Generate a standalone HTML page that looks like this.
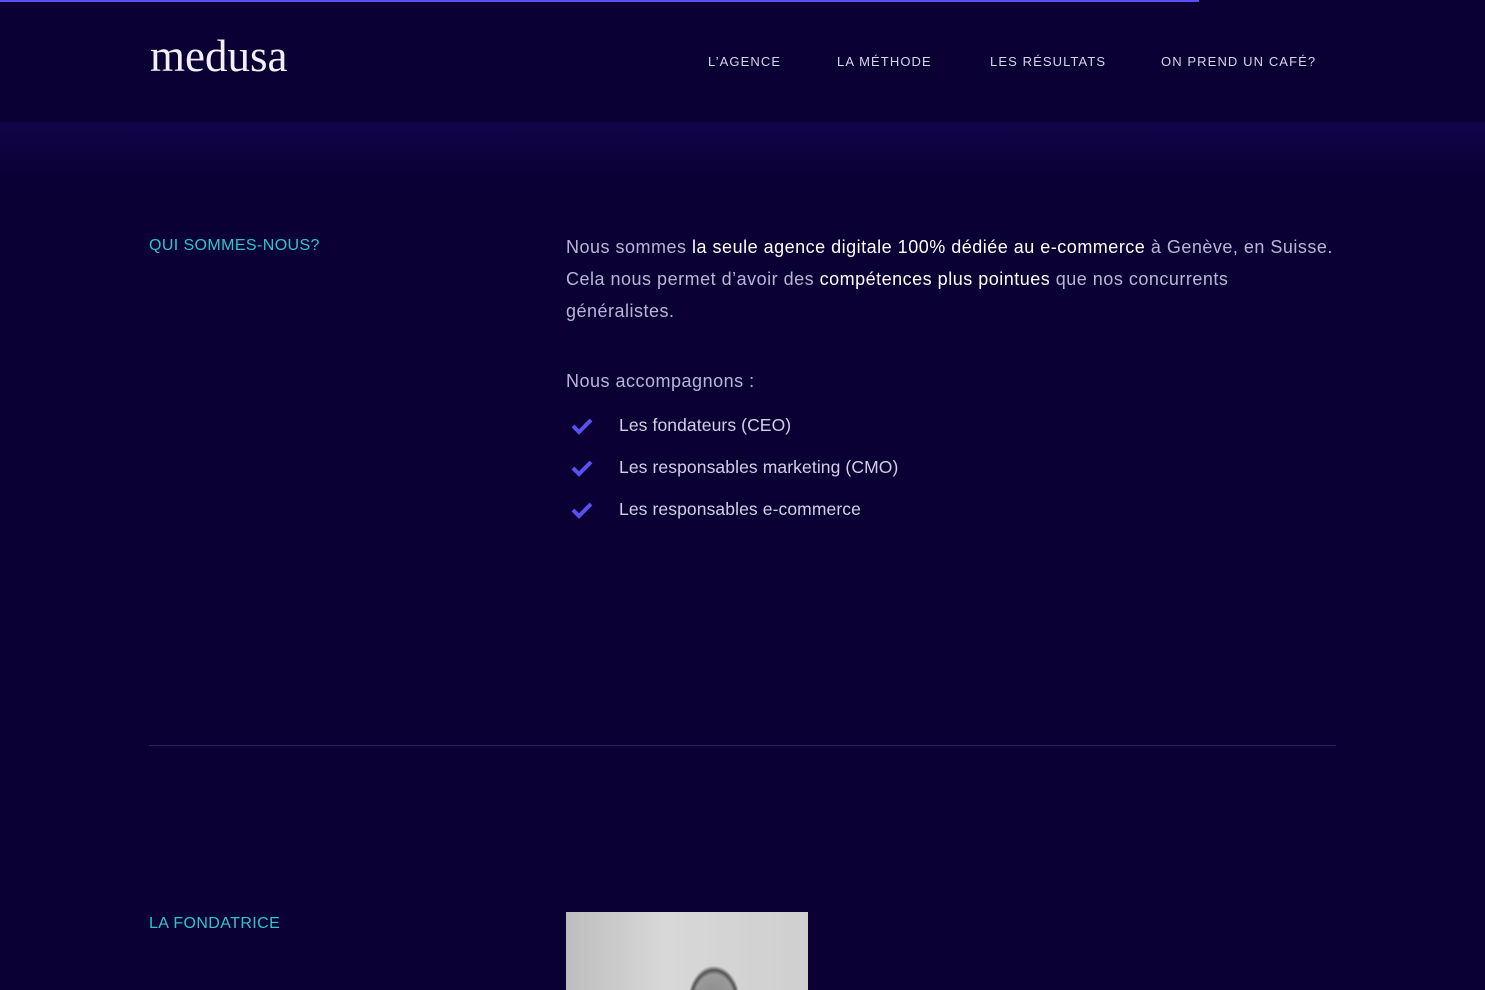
<!DOCTYPE html>
<html><head><meta charset="utf-8"><style>
*{margin:0;padding:0;box-sizing:border-box}
body{width:1485px;height:990px;overflow:hidden;background:#0a0033;font-family:"Liberation Sans",sans-serif;position:relative;color:#b9b5d8}
.bar{position:absolute;top:0;left:0;width:1199px;height:2px;background:#5a4ff0}
.band{position:absolute;top:122px;left:0;width:1485px;height:60px;background:linear-gradient(#12044a,#0a0033)}
.logo{position:absolute;left:150px;top:30px;font-family:"Liberation Serif",serif;font-size:45px;color:#f3eef8;letter-spacing:0px;font-weight:300}
.nav{position:absolute;top:54px;font-size:13px;letter-spacing:1.1px;color:#d8d5ea}
h3{position:absolute;left:149px;font-size:16px;color:#2ec7c7;font-weight:normal;letter-spacing:.4px}
.p{position:absolute;left:566px;font-size:18px;line-height:32px;letter-spacing:.5px;width:790px}
.w{color:#fff}
.li{position:absolute;left:619px;font-size:17.5px;letter-spacing:.1px;color:#d2cfe6}
.ck{position:absolute;left:571px}
.hr{position:absolute;left:149px;top:745px;width:1187px;height:1px;background:#2a2360}
.photo{position:absolute;left:566px;top:912px;width:242px;height:78px;background:radial-gradient(ellipse 40px 55px at 148px 90px,#8a8a8a 0,#9a9a9a 50%,#555 58%,transparent 66%),linear-gradient(90deg,#bdbdbd,#d8d8d8 40%,#cfcfcf)}
</style></head><body>
<div class="bar"></div>
<div class="band"></div>
<div class="logo">medusa</div>
<div class="nav" style="left:708px">L’AGENCE</div>
<div class="nav" style="left:837px">LA MÉTHODE</div>
<div class="nav" style="left:990px">LES RÉSULTATS</div>
<div class="nav" style="left:1161px">ON PREND UN CAFÉ?</div>
<h3 style="top:237px">QUI SOMMES-NOUS?</h3>
<div class="p" style="top:231px">Nous sommes <span class="w">la seule agence digitale 100% dédiée au e-commerce</span> à Genève, en Suisse.<br>Cela nous permet d’avoir des <span class="w">compétences plus pointues</span> que nos concurrents<br>généralistes.</div>
<div class="p" style="top:365px">Nous accompagnons :</div>
<svg class="ck" style="top:417px" width="22" height="18" viewBox="0 0 22 18"><path d="M2 9l6 6L20 3" stroke="#5b50f0" stroke-width="4" fill="none"/></svg>
<div class="li" style="top:415px">Les fondateurs (CEO)</div>
<svg class="ck" style="top:459px" width="22" height="18" viewBox="0 0 22 18"><path d="M2 9l6 6L20 3" stroke="#5b50f0" stroke-width="4" fill="none"/></svg>
<div class="li" style="top:457px">Les responsables marketing (CMO)</div>
<svg class="ck" style="top:501px" width="22" height="18" viewBox="0 0 22 18"><path d="M2 9l6 6L20 3" stroke="#5b50f0" stroke-width="4" fill="none"/></svg>
<div class="li" style="top:499px">Les responsables e-commerce</div>
<div class="hr"></div>
<h3 style="top:915px">LA FONDATRICE</h3>
<div class="photo"></div>
</body></html>
